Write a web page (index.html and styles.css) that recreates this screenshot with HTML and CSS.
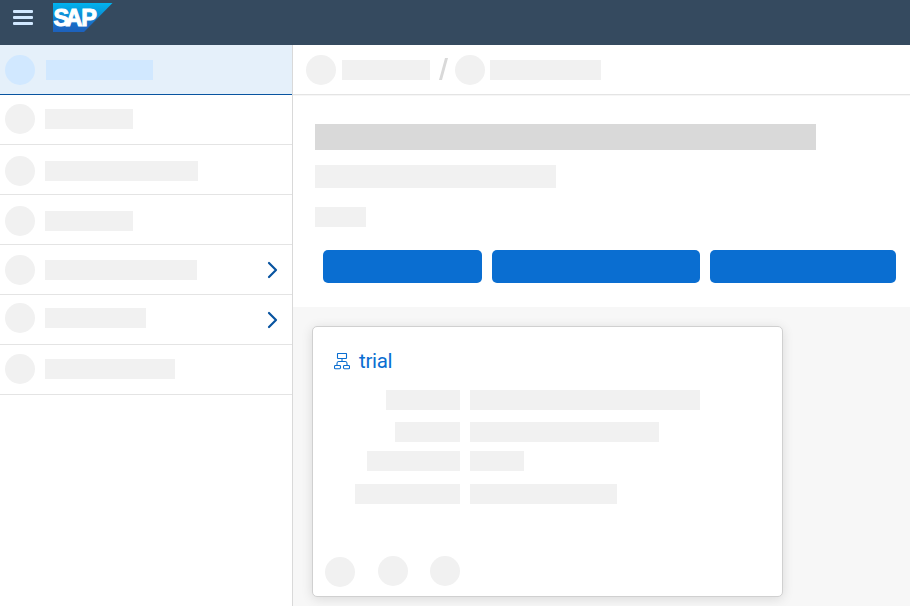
FILE: index.html
```html
<!DOCTYPE html>
<html lang="en">
<head>
<meta charset="utf-8">
<title>SAP</title>
<link rel="stylesheet" href="styles.css">
</head>
<body>
<header class="shell">
  <svg class="menu" width="20" height="15" viewBox="0 0 20 15"><g fill="#d1e8ff"><rect width="20" height="3" rx="1"/><rect y="6" width="20" height="3" rx="1"/><rect y="12" width="20" height="3" rx="1"/></g></svg>
  <svg class="logo" width="60" height="29" viewBox="0 0 60 29">
    <defs><linearGradient id="brand" x1="0" y1="0" x2="0" y2="1"><stop offset="0" stop-color="#00b3ef"/><stop offset=".25" stop-color="#06a0e0"/><stop offset=".75" stop-color="#1a6bc6"/><stop offset="1" stop-color="#1d61bc"/></linearGradient></defs>
    <path d="M0 0H59.5L31 29H0Z" fill="url(#brand)"/>
    <text class="logo-text" x="0.5 12.4 28.2" y="22.8">SAP</text>
  </svg>
</header>
<div class="body">
  <nav class="side">
    <div class="item selected"><i class="dot"></i><i class="bar w107"></i></div>
    <div class="item up1"><i class="dot"></i><i class="bar w88"></i></div>
    <div class="item down1"><i class="dot"></i><i class="bar w153"></i></div>
    <div class="item down1"><i class="dot"></i><i class="bar w88"></i></div>
    <div class="item"><i class="dot"></i><i class="bar w152"></i><svg class="chevron" width="11" height="18" viewBox="0 0 11 18"><path d="M2 2L9 9L2 16"/></svg></div>
    <div class="item up2"><i class="dot"></i><i class="bar w101"></i><svg class="chevron" width="11" height="18" viewBox="0 0 11 18"><path d="M2 2L9 9L2 16"/></svg></div>
    <div class="item up1"><i class="dot"></i><i class="bar w130"></i></div>
  </nav>
  <main class="main">
    <div class="crumbs">
      <i class="dot"></i><i class="bar w88"></i>
      <svg class="slash" width="9" height="22" viewBox="0 0 9 22"><path d="M6 0H9L3 22H0Z" fill="#d9d9d9"/></svg>
      <i class="dot"></i><i class="bar w111"></i>
    </div>
    <section class="hero">
      <div class="title"></div>
      <div class="subtitle"></div>
      <div class="bar w51"></div>
      <div class="actions"><button class="w159"></button><button class="w208"></button><button class="w186"></button></div>
    </section>
    <section class="content">
      <article class="card">
        <h2 class="card-head">
          <svg width="16" height="17" viewBox="0 0 16 17" fill="none" stroke="#0a6ed1" stroke-width="1.1"><rect x="3.5" y=".5" width="9" height="5" rx=".6"/><path d="M8 5.5V8.5M3 12.5V10.5Q3 8.5 4.6 8.5H11.4Q13 8.5 13 10.5V12.5"/><rect x=".5" y="12.5" width="6" height="3.2" rx=".9"/><rect x="9.5" y="12.5" width="6" height="3.2" rx=".9"/></svg>
          <span>trial</span>
        </h2>
        <div class="facts">
          <i class="bar w74"></i><i class="bar w230"></i>
          <i class="bar w65"></i><i class="bar w189"></i>
          <i class="bar w93"></i><i class="bar w54"></i>
          <i class="bar w105"></i><i class="bar w147"></i>
        </div>
        <div class="tools"><i class="dot"></i><i class="dot"></i><i class="dot"></i></div>
      </article>
    </section>
  </main>
</div>
</body>
</html>
```
FILE: styles.css
```css
* { box-sizing: border-box; }
body { margin: 0; height: 606px; display: flex; flex-direction: column; overflow: hidden; background: #fff; font-family: Roboto, "Open Sans", sans-serif; }
svg { display: block; flex: none; }
.shell { height: 45px; flex: none; display: flex; align-items: flex-start; background: #354a5f; }
.menu { margin: 10px 0 0 13px; }
.logo { margin: 3px 0 0 20px; overflow: visible; }
.logo-text { font: 700 23.5px "Liberation Sans", sans-serif; fill: #fff; stroke: #fff; stroke-width: 1; }
.body { flex: 1; display: flex; min-height: 0; }
.side { width: 293px; flex: none; border-right: 1px solid #d9d9d9; }
.item { height: 50px; display: flex; align-items: flex-start; padding: 10px 14px 0 5px; border-bottom: 1px solid #e4e4e4; }
.item .bar { margin: 5px 0 0 10px; }
.up1 { padding-top: 9px; }
.up2 { padding-top: 8px; }
.down1 { padding-top: 11px; }
.selected { background: #e5f0fa; border-bottom-color: #0854a0; }
.selected .bar { margin-left: 11px; }
.item.selected .dot, .item.selected .bar { background: #d1e8ff; }
.chevron { margin: 6px 0 0 auto; fill: none; stroke: #0854a0; stroke-width: 2.2; stroke-linecap: round; stroke-linejoin: round; }
.up2 .chevron { margin-top: 8px; }
.dot, .bar { display: block; flex: none; background: #f1f1f1; }
.dot { width: 30px; height: 30px; border-radius: 50%; }
.bar { height: 20px; }
.main { flex: 1; display: flex; flex-direction: column; min-width: 0; }
.crumbs { height: 50px; flex: none; display: flex; align-items: center; padding: 1px 0 0 13px; border-bottom: 1px solid #e4e4e4; box-shadow: 0 1px 0 #f6f6f6; }
.crumbs .bar { margin-left: 6px; }
.crumbs .slash { margin: -2px 7px 0 9px; }
.crumbs .slash ~ .bar { margin-left: 5px; }
.hero { height: 212px; flex: none; padding: 29px 0 0 22px; }
.title { width: 501px; height: 26px; background: #d9d9d9; }
.subtitle { width: 241px; height: 23px; margin: 15px 0 19px; background: #f1f1f1; }
.actions { display: flex; gap: 10px; margin: 23px 0 0 8px; }
button { height: 33px; padding: 0; border: 0; border-radius: 5px; background: #0a6ed1; }
.content { flex: 1; padding: 19px 0 0 19px; background: #f7f7f7; }
.card { width: 471px; height: 271px; background: #fff; border: 1px solid #d0d0d0; border-radius: 5px; box-shadow: 0 2px 12px rgba(0,0,0,.12); }
.card-head { display: flex; align-items: flex-start; margin: 0; height: 63px; padding: 26px 0 0 21px; color: #0a6ed1; font-size: 20.5px; font-weight: 400; line-height: 24px; }
.card-head span { margin: -4px 0 0 9px; letter-spacing: -.3px; }
.facts { display: grid; grid-template-columns: 147px 1fr; column-gap: 10px; grid-template-rows: 32px 29px 33px 20px; }
.facts .bar:nth-child(odd) { justify-self: end; }
.tools { display: flex; padding: 52px 0 0 12px; }
.tools .dot:first-child { margin: 1px 23px 0 0; }
.tools .dot:last-child { margin-left: 22px; }
.w51 { width: 51px; }
.w54 { width: 54px; }
.w65 { width: 65px; }
.w74 { width: 74px; }
.w88 { width: 88px; }
.w93 { width: 93px; }
.w101 { width: 101px; }
.w105 { width: 105px; }
.w107 { width: 107px; }
.w111 { width: 111px; }
.w130 { width: 130px; }
.w147 { width: 147px; }
.w152 { width: 152px; }
.w153 { width: 153px; }
.w159 { width: 159px; }
.w186 { width: 186px; }
.w189 { width: 189px; }
.w208 { width: 208px; }
.w230 { width: 230px; }
```
